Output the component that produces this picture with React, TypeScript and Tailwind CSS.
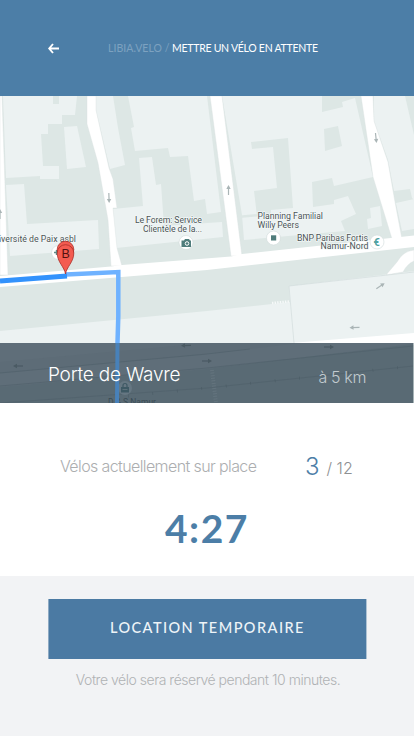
import React from "react";

const LIGHT = "#ecf2f2";

function StreetArrow({ x, y, angle, color = "#aab5b6", length = 10 }: { x: number; y: number; angle: number; color?: string; length?: number }) {
  const h = length / 2;
  return (
    <g transform={`translate(${x} ${y}) rotate(${angle})`} stroke={color} fill={color}>
      <path d={`M${-h} 0H${h - 2}`} strokeWidth="1.2" />
      <path d={`M${h} 0l-4 -2.2v4.4z`} stroke="none" />
    </g>
  );
}

function CityMap() {
  return (
    <svg viewBox="0 96 414 307" className="block h-full w-full" fontFamily="Roboto, sans-serif">
      <rect x="0" y="96" width="414" height="307" fill="#dde7e5" />
      {/* Buildings */}
      <g fill={LIGHT}>
        <path d="M3 96H53V104H59V96H77L75 115H62V124H48V134H41L43 166H59V179H40V176L6 178Z" />
        <path d="M64 127L77 126L86 167L67 169Z" />
        <path d="M6 185L24 184L27 224L98 220L99 249L10 256Z" />
        <path d="M96 96H113L118 128L125 165L110 169L96 110Z" />
        <path d="M128 96H207L221 212L207 214L205 199L194 201L188 156L170 157L168 148L135 151L131 128L134 127Z" />
        <path d="M113 209L143 206L139 158L152 157L156 185L161 184L164 226L222 222L223 237L116 248Z" />
        <path d="M222 96H322V112L343 107L342 102L355 98L373 177L334 186L332 178L312 182L313 207L334 204V200L348 196L356 214L341 221L345 231L244 240L242 215Z" />
        <path d="M374 96H405L414 135V200L412 198L410 189L394 191L388 160L374 121Z" />
        <path d="M370 208L380 206L382 226L368 229L367 219L371 218Z" />
        <path d="M396 203L414 199V229L402 231Z" />
        <path d="M0 331L207 311L290 302L289 286L414 271V345H0Z" />
      </g>
      <g fill="#dde7e5">
        <path d="M324 129L338 126L342 146L325 151Z" />
        <path d="M251 142L288 138L293 208L271 210V214L257 216L254 191L277 188L273 147L252 149Z" />
        <path d="M240 215.5L257 214V216.5L240 218Z" />
      </g>
      {/* Streets */}
      <g fill="#fff" stroke="#d9e1e1" strokeWidth=".4">
        <path d="M0 96H2L8 275H0Z" />
        <path d="M87 96H96V110L109 168L113 179L117 208H113L117 248L122 266H111L108 220L98 163L87 124Z" />
        <path d="M210 96H222L242 256H231Z" />
        <path d="M361 96H373L374 121L388 162L395 202L402 239H392L373 177Z" />
        <path d="M386 275L397 262Q403 251 414 250V261Q407 264 403 272Z" />
      </g>
      <path d="M0 276L111 266.5L122 265L231 256.5L242 254L414 235.5V247L207 270L0 287Z" fill="#fff" />
      <path d="M291 343L414 333V343Z" fill="#fff" />
      <path d="M289 286L294 343M289 286L414 272" fill="none" stroke="#d2dcdc" strokeWidth=".7" />
      <path d="M272 303L289 301.5" stroke="#f6f9f9" strokeWidth="2.5" strokeDasharray="1.4 1.2" />
      <StreetArrow x={109} y={198} angle={88} />
      <StreetArrow x={228.5} y={190} angle={-90} />
      <StreetArrow x={376} y={138} angle={84} />
      <StreetArrow x={0} y={214} angle={-90} />
      <StreetArrow x={380.5} y={286} angle={-34} />
      <StreetArrow x={354.5} y={327.5} angle={178} />

      {/* Darkened strip under the station name */}
      <rect x="0" y="343" width="413.4" height="60" fill="#596a74" />
      <path d="M0 343H413V344L207 369L0 387Z" fill="#5f6e79" />
      <path d="M0 362L207 343H300L207 354L0 373Z" fill="#5d6c77" />
      <path d="M0 373L207 354L250 349M0 386L207 368L413 346M0 403L207 388L413 366" fill="none" stroke="#4f606a" strokeWidth=".6" />
      <path d="M128 396L207 388L413 366" fill="none" stroke="#4b5c66" strokeWidth="3" strokeDasharray=".6 24" />
      <path d="M212 370L216 403" stroke="#64747e" strokeWidth="4" strokeDasharray="1 1.6" />
      <StreetArrow x={18} y={366} angle={180} color="#4a5a63" />
      <StreetArrow x={186} y={345.5} angle={178} color="#4a5a63" />
      <StreetArrow x={329} y={347} angle={0} color="#4a5a63" />
      <StreetArrow x={207} y={361} angle={0} color="#4a5a63" />
      <circle cx="125" cy="388" r="7" fill="#667782" />
      <rect x="121" y="387" width="8" height="5.5" fill="#3e5964" />
      <path d="M123 387V385.5A2 2 0 0 1 127 385.5V387" fill="none" stroke="#3e5964" strokeWidth="1.2" />
      <path d="M122.5 389.5H127.5" stroke="#667782" strokeWidth=".8" />
      <text x="108" y="404.5" fontSize="8.5" fill="#3b4c55" textLength="48">D &amp; S Namur</text>

      {/* Route */}
      <path d="M66 274.5L118.3 272V316L117.5 343" fill="none" stroke="#6eb2ff" strokeWidth="4.5" />
      <path d="M117.5 343L117 403" stroke="#4881b9" strokeWidth="4" />
      <path d="M0 281L67 276" stroke="#3292fc" strokeWidth="4.8" />

      {/* Points of interest */}
      <g fill="#fff" stroke="#d0dada" strokeWidth=".6">
        <circle cx="58.5" cy="252.5" r="7" />
        <circle cx="186" cy="242.5" r="7" />
        <circle cx="273.5" cy="238" r="7" />
        <circle cx="377" cy="242" r="7" />
      </g>
      <g fontSize="8.8" fill="#4c5556" stroke="#f3f7f7" strokeWidth="1.5" paintOrder="stroke" strokeLinejoin="round">
        <text x="-1" y="241.7" textLength="77">iversité de Paix asbl</text>
        <text x="135" y="223.3" textLength="67">Le Forem: Service</text>
        <text x="143" y="232" textLength="59">Clientèle de la...</text>
        <text x="257.5" y="219" textLength="65.5">Planning Familial</text>
        <text x="257.5" y="227.6" textLength="41.5">Willy Peers</text>
        <text x="297" y="240.5" textLength="71">BNP Paribas Fortis</text>
        <text x="320.5" y="249" textLength="48">Namur-Nord</text>
      </g>
      <path d="M54 252.5H59M56.5 250V255" stroke="#5f8987" strokeWidth="1.4" />
      <path d="M181.5 240.5H184L185 239H189L190 240.5H191V247H181.5Z" fill="#4f7c7b" />
      <circle cx="187" cy="243.5" r="1.8" fill="none" stroke="#fff" strokeWidth="1" />
      <rect x="271" y="235.3" width="5.2" height="5.2" fill="#4f7c7b" />
      <text x="373.4" y="246" fontSize="11" fontWeight="700" fill="#4fa2a2">€</text>

      {/* Two stacked destination pins */}
      <g fill="#f35b50" stroke="#a92d27" strokeWidth=".8">
        <circle cx="65.5" cy="249.5" r="8.3" />
        <path d="M65.5 274C64.5 267 57.2 262 57.2 253A8.3 8.3 0 0 1 73.8 253C73.8 262 66.5 267 65.5 274Z" />
      </g>
      <text x="65.6" y="258.3" textAnchor="middle" fontSize="12.5" fill="#50120f" fontFamily="Liberation Sans, sans-serif">B</text>
    </svg>
  );
}

export default function App() {
  return (
    <main className="flex h-[736px] w-[414px] flex-col overflow-hidden bg-white font-['Inter',sans-serif] whitespace-nowrap">
      <header className="flex h-24 items-center bg-[#4c7ea7] pl-12 font-['Lato',sans-serif] text-[10.5px]">
        <svg className="h-[11px] w-[11px]" viewBox="0 0 11 11" fill="none" stroke="#fff" strokeWidth="1.9">
          <path d="M5 1L1.2 5.5L5 10M1.2 5.5H11" />
        </svg>
        <nav className="ml-[49px] flex pt-px">
          <span className="w-16 tracking-[0.05px] text-[#7da2c0]">LIBIA.VELO /</span>
          <span className="tracking-[-0.27px] text-white">METTRE UN VÉLO EN ATTENTE</span>
        </nav>
      </header>

      <section className="grid h-[307px]">
        <div className="col-start-1 row-start-1 h-[307px]"><CityMap /></div>
        <div className="z-10 col-start-1 row-start-1 flex h-[60px] items-center justify-between self-end px-12 font-light text-white">
          <h1 className="pt-1 text-[19px] tracking-[-0.22px]">Porte de Wavre</h1>
          <p className="pt-2 text-[16px] tracking-[-0.35px] text-[#c2cacf]">à 5 km</p>
        </div>
      </section>

      <section className="flex h-[173px] flex-col">
        <div className="mt-[50px] flex h-7 items-baseline pl-[60px] font-light text-[#acaeb0]">
          <p className="w-[245px] pb-1.5 text-[16px] leading-7 tracking-[-0.61px]"><span className="inline-block -translate-y-[3px]">Vélos actuellement sur place</span></p>
          <p className="text-[24px] leading-7 text-[#4c7ea7]">3</p>
          <p className="ml-[7px] text-[16px] text-[#8e9092]"><span className="inline-block -translate-y-px">/ 12</span></p>
        </div>
        <p className="mt-[23px] pl-[165px] font-['Lato',sans-serif] text-[39px] leading-[48px] font-bold tracking-[1.5px] text-[#4c7ea7]">4:27</p>
      </section>

      <footer className="flex h-40 flex-col items-center bg-[#f2f3f5] pt-[23px]">
        <button className="h-[60px] w-[318px] translate-x-[0.4px] bg-[#4b7aa3] pb-0.5 font-['Lato',sans-serif] text-[14.5px] font-medium tracking-[1.45px] text-[#eef4f8]">LOCATION TEMPORAIRE</button>
        <p className="mt-[11px] ml-0.5 text-[14px] leading-5 font-light tracking-[-0.48px] text-[#b0b2b4]">Votre vélo sera réservé pendant 10 minutes.</p>
      </footer>
    </main>
  );
}
